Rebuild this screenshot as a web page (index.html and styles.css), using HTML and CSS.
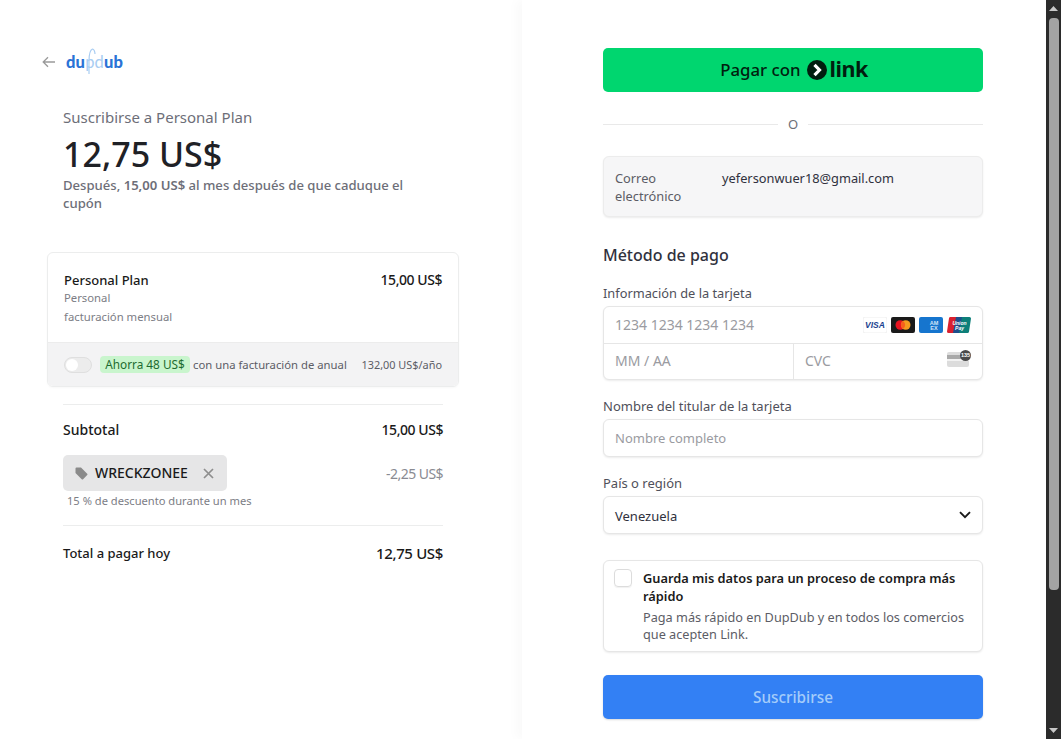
FILE: index.html
```html
<!DOCTYPE html>
<html lang="es">
<head>
    <meta charset="UTF-8">
    <meta name="viewport" content="width=device-width, initial-scale=1.0">
    <title>Suscribirse a Personal Plan</title>
    <link rel="stylesheet" href="styles.css">
</head>
<body>
    <div class="page">
        <section class="summary">
            <div class="brand">
                <svg class="backArrow" width="14" height="12" viewBox="0 0 14 12" fill="none" stroke="#9a9a9a" stroke-width="1.3">
                    <path d="M13 6H1.5M6 1.2L1.2 6 6 10.8"/>
                </svg>
                <div class="logo">
                    <svg class="logoNote" width="16" height="27" viewBox="0 0 16 27" fill="none" stroke="#a9cdf2" stroke-width="1.2">
                        <path d="M3 26V13M3 13C3 8 4 2 6.500 1c1.500 0 2.500 3 2.500 5"/>
                    </svg>
                    <span>du</span><span class="logoLight">pd</span><span>ub</span>
                </div>
            </div>

            <div class="intro">
                <div class="introTitle">Suscribirse a Personal Plan</div>
                <div class="introPrice">12,75 US$</div>
                <div class="introNote">Después, <b>15,00 US$</b> al mes después de que caduque el cupón</div>
            </div>

            <div class="planBox">
                <div class="planMain">
                    <div class="planInfo">
                        <div class="strong planName">Personal Plan</div>
                        <div class="small">Personal</div>
                        <div class="small">facturación mensual</div>
                    </div>
                    <div class="strong amount">15,00 US$</div>
                </div>
                <div class="planYear">
                    <span class="toggle"><span class="toggleKnob"></span></span>
                    <span class="savePill">Ahorra 48 US$</span>
                    <span class="yearText">con una facturación de anual</span>
                    <span class="yearPrice">132,00 US$/año</span>
                </div>
            </div>

            <div class="totals">
                <div class="totalRow subtotalRow">
                    <span class="strong">Subtotal</span>
                    <span class="strong amount">15,00 US$</span>
                </div>
                <div class="couponRow">
                    <div>
                        <div class="coupon">
                            <svg width="13" height="13" viewBox="0 0 13 13" fill="#8a8a8a">
                                <path d="M0.5 1.5A1 1 0 0 1 1.5 0.5H6L12.2 6.7a1 1 0 0 1 0 1.4L8.1 12.2a1 1 0 0 1-1.4 0L0.5 6z"/>
                            </svg>
                            <span class="couponCode">WRECKZONEE</span>
                            <svg width="11" height="11" viewBox="0 0 11 11" fill="none" stroke="#8e8e8e" stroke-width="1.7">
                                <path d="M1 1l9 9M10 1l-9 9"/>
                            </svg>
                        </div>
                        <div class="couponNote">15 % de descuento durante un mes</div>
                    </div>
                    <span class="discount">-2,25 US$</span>
                </div>
                <div class="totalRow dueRow">
                    <span class="strong planName">Total a pagar hoy</span>
                    <span class="duePrice">12,75 US$</span>
                </div>
            </div>
        </section>

        <section class="checkout">
            <button class="linkButton" type="button">
                <span>Pagar con</span>
                <svg width="20" height="20" viewBox="0 0 20 20">
                    <circle cx="10" cy="10" r="10" fill="#011e0f"/>
                    <path d="M7.500 4.800l5 5.200-5 5.200" fill="none" stroke="#fff" stroke-width="3.200"/>
                </svg>
                <span class="linkWord">link</span>
            </button>

            <div class="orLine"><span>O</span></div>

            <div class="emailBox">
                <span class="emailLabel">Correo electrónico</span>
                <span class="emailValue">yefersonwuer18@gmail.com</span>
            </div>

            <h2 class="payTitle">Método de pago</h2>

            <label class="fieldLabel cardLabel">Información de la tarjeta</label>
            <div class="cardBox">
                <div class="cardRow">
                    <span class="placeholder cardDigits">1234 1234 1234 1234</span>
                    <div class="brands">
                        <svg width="24" height="16" viewBox="0 0 24 16">
                            <rect width="24" height="16" rx="2" fill="#fff" stroke="#eee"/>
                            <text class="visaMark" x="12" y="11.400" text-anchor="middle">VISA</text>
                        </svg>
                        <svg width="24" height="16" viewBox="0 0 24 16">
                            <rect width="24" height="16" rx="2" fill="#1a1a1a"/>
                            <circle cx="9.300" cy="8" r="4.800" fill="#e8121f"/>
                            <circle cx="14.700" cy="8" r="4.800" fill="#f59a1e"/>
                            <path d="M12 4a4.800 4.800 0 0 1 0 8 4.800 4.800 0 0 1 0-8z" fill="#f5601d"/>
                        </svg>
                        <svg width="24" height="16" viewBox="0 0 24 16">
                            <rect width="24" height="16" rx="2" fill="#1675ce"/>
                            <text class="amexMark" x="15" y="7.500" text-anchor="middle">AM</text>
                            <text class="amexMark" x="15" y="12.500" text-anchor="middle">EX</text>
                        </svg>
                        <svg width="24" height="16" viewBox="0 0 24 16">
                            <path d="M3 0h7L7 16H1.500A1.500 1.500 0 0 1 0 14.500L2 1.200A1.500 1.500 0 0 1 3 0z" fill="#d9202f"/>
                            <path d="M9 0h7l-3 16H6z" fill="#1c4f8c"/>
                            <path d="M15 0h7.500A1.500 1.500 0 0 1 24 1.500L22 14.800A1.500 1.500 0 0 1 20.500 16H12z" fill="#0d7f79"/>
                            <text class="upMark" x="12.500" y="7.500" text-anchor="middle">Union</text>
                            <text class="upMark" x="12.500" y="12.500" text-anchor="middle">Pay</text>
                        </svg>
                    </div>
                </div>
                <div class="cardSplit">
                    <div class="cardCell"><span class="placeholder cardDigits">MM / AA</span></div>
                    <div class="cardCell cvcCell">
                        <span class="placeholder cardDigits">CVC</span>
                        <svg class="cvcIcon" width="24" height="17" viewBox="0 0 24 17">
                            <rect y="2" width="22" height="15" rx="2" fill="#dcdcdc"/>
                            <rect y="5" width="22" height="4" fill="#a9a9a9"/>
                            <rect y="9" width="22" height="2" fill="#f2f2f2"/>
                            <circle cx="18.500" cy="5.500" r="5.500" fill="#4a4a4a"/>
                            <text class="cvcMark" x="18.500" y="7.400" text-anchor="middle">135</text>
                        </svg>
                    </div>
                </div>
            </div>

            <label class="fieldLabel nameLabel">Nombre del titular de la tarjeta</label>
            <div class="inputBox"><span class="placeholder">Nombre completo</span></div>

            <label class="fieldLabel countryLabel">País o región</label>
            <div class="inputBox selectBox">
                <span class="selectValue">Venezuela</span>
                <svg width="12" height="8" viewBox="0 0 12 8" fill="none" stroke="#1a1a1a" stroke-width="1.900">
                    <path d="M1 1.200l5 5 5-5"/>
                </svg>
            </div>

            <div class="saveBox">
                <span class="checkBox"></span>
                <div class="saveText">
                    <div class="saveTitle">Guarda mis datos para un proceso de compra más rápido</div>
                    <div class="saveNote">Paga más rápido en DupDub y en todos los comercios que acepten Link.</div>
                </div>
            </div>

            <button class="subscribeButton" type="button">Suscribirse</button>
        </section>

        <div class="scrollBar">
            <svg width="9" height="5" viewBox="0 0 9 5" fill="#c8c8c8"><path d="M0 5L4.500 0 9 5z"/></svg>
            <div class="scrollTrack"><div class="scrollThumb"></div></div>
            <svg width="9" height="5" viewBox="0 0 9 5" fill="#c8c8c8"><path d="M0 0L4.500 5 9 0z"/></svg>
        </div>
    </div>
</body>
</html>
```

FILE: styles.css
```css
* {
    box-sizing: border-box;
}

html, body {
    margin: 0;
    height: 100%;
    overflow: hidden;
    background-color: #fff;
}

body {
    font-family: "Noto Sans", "Open Sans", sans-serif;
    font-size: 14px;
    color: #1a1a1a;
}

.page {
    display: flex;
    width: 1061px;
    height: 739px;
}

/* Cột trái */
.summary {
    width: 522px;
    flex-shrink: 0;
    padding: 47px 0 0 42px;
}

.brand {
    display: flex;
    align-items: center;
    gap: 10px;
    height: 30px;
}

.logo {
    position: relative;
    font-family: "Lato", sans-serif;
    font-size: 16.5px;
    line-height: 30px;
    font-weight: 900;
    letter-spacing: 0.2px;
    color: #2a73d6;
    white-space: nowrap;
}

.logoLight {
    color: #a9cdf2;
    font-weight: 400;
}

.logoNote {
    position: absolute;
    left: 20px;
    top: 1px;
}

.intro {
    padding: 30px 0 0 21px;
    width: 380px;
}

.introTitle {
    font-size: 15px;
    line-height: 20px;
    color: #6d6e78;
}

.introPrice {
    margin-top: 5px;
    font-size: 34px;
    line-height: 44px;
    font-weight: 500;
    color: #1f2126;
}

.introNote {
    font-size: 13.1px;
    line-height: 18px;
    font-weight: 500;
    color: #6d6e78;
}

.introNote b {
    font-weight: 600;
}

.planBox {
    width: 412px;
    margin: 40px 0 0 5px;
    border: 1px solid #eceded;
    border-radius: 6px;
    box-shadow: 0 1px 2px rgba(0, 0, 0, 0.03);
    overflow: hidden;
}

.planMain {
    display: flex;
    justify-content: space-between;
    height: 89px;
    padding: 19px 16px 0;
}

.strong {
    font-size: 14px;
    line-height: 16px;
    font-weight: 500;
    color: #1a1a1a;
}

.planName {
    font-size: 13px;
}

.amount {
    letter-spacing: -0.45px;
}

.small {
    font-size: 11.3px;
    line-height: 19px;
    color: #7c7d85;
}

.planYear {
    display: flex;
    align-items: center;
    height: 44px;
    padding: 0 16px;
    background-color: #f3f3f4;
    border-top: 1px solid #ececec;
    font-size: 11.3px;
    color: #5c5d66;
    white-space: nowrap;
}

.toggle {
    width: 28px;
    height: 16px;
    border-radius: 8px;
    background-color: #ececec;
    border: 1px solid #dfdfdf;
    padding: 1px;
}

.toggleKnob {
    display: block;
    width: 12px;
    height: 12px;
    border-radius: 50%;
    background-color: #fff;
}

.savePill {
    margin-left: 8px;
    width: 90px;
    text-align: center;
    line-height: 17px;
    font-size: 11.8px;
    border-radius: 4px;
    background-color: #c9f5cd;
    color: #1d6b30;
}

.yearText {
    margin-left: 3px;
}

.yearPrice {
    margin-left: auto;
    font-size: 10.9px;
}

.totals {
    width: 380px;
    margin: 17px 0 0 21px;
}

.totalRow {
    display: flex;
    justify-content: space-between;
    align-items: center;
}

.subtotalRow {
    border-top: 1px solid #eceded;
    padding-top: 17px;
}

.couponRow {
    display: flex;
    justify-content: space-between;
    align-items: flex-start;
    margin-top: 17px;
    height: 71px;
    border-bottom: 1px solid #eceded;
}

.coupon {
    display: flex;
    align-items: center;
    width: 164px;
    height: 36px;
    padding: 0 12px;
    border-radius: 5px;
    background-color: #e6e6e7;
}

.couponCode {
    margin: 0 15px 0 7px;
    font-size: 14px;
    line-height: 18px;
    font-weight: 500;
    color: #1a1a1a;
}

.couponNote {
    margin: 1px 0 0 4px;
    font-size: 11.15px;
    line-height: 18px;
    color: #7c7d85;
}

.discount {
    margin-top: 9px;
    line-height: 20px;
    letter-spacing: -0.55px;
    color: #8a8b92;
}

.dueRow {
    padding-top: 17px;
}

.duePrice {
    font-size: 15px;
    line-height: 20px;
    font-weight: 500;
    letter-spacing: -0.35px;
}

/* Cột phải */
.checkout {
    flex: 1;
    padding: 48px 63px 0 81px;
    box-shadow: -6px 0 10px rgba(0, 0, 0, 0.025);
}

.linkButton {
    display: flex;
    justify-content: center;
    align-items: center;
    gap: 6px;
    width: 100%;
    height: 44px;
    padding: 0 0 2px 2px;
    border: none;
    border-radius: 5px;
    background-color: #00d66f;
    font-family: inherit;
    font-size: 16.8px;
    font-weight: 500;
    color: #011e0f;
}

.linkButton svg {
    margin-top: 2px;
}

.linkWord {
    margin-left: -3px;
    font-size: 21.5px;
    line-height: 30px;
    font-weight: 700;
    letter-spacing: -0.5px;
}

.orLine {
    display: flex;
    align-items: center;
    gap: 10px;
    margin-top: 22px;
    height: 20px;
    font-size: 13px;
    color: #6d6e78;
}

.orLine::before,
.orLine::after {
    content: "";
    flex: 1;
    border-top: 1px solid #e9e9e9;
}

.emailBox {
    display: flex;
    height: 61px;
    margin-top: 22px;
    padding: 12px 11px;
    border-radius: 6px;
    border: 1px solid #ececec;
    background-color: #f6f6f7;
    box-shadow: 0 1px 2px rgba(0, 0, 0, 0.08);
    line-height: 18px;
    font-size: 12.8px;
}

.emailLabel {
    width: 107px;
    color: #5c5d66;
}

.emailValue {
    color: #30313d;
}

.payTitle {
    margin: 27px 0 0;
    font-size: 16px;
    line-height: 22px;
    font-weight: 500;
    color: #30313d;
}

.fieldLabel {
    display: block;
    font-size: 13px;
    line-height: 18px;
    color: #4f505a;
}

.cardLabel {
    margin-top: 18px;
    margin-bottom: 4px;
    font-size: 12.8px;
}

.nameLabel,
.countryLabel {
    margin-top: 17px;
    margin-bottom: 4px;
}

.cardBox,
.inputBox,
.saveBox {
    border: 1px solid #e6e6e6;
    border-radius: 6px;
    background-color: #fff;
    box-shadow: 0 1px 2px rgba(0, 0, 0, 0.08);
}

.cardRow {
    display: flex;
    justify-content: space-between;
    align-items: center;
    height: 37px;
    padding: 0 11px;
    border-bottom: 1px solid #e6e6e6;
}

.brands {
    display: flex;
    gap: 4px;
}

.brands svg {
    display: block;
}

.visaMark {
    font-family: "Liberation Sans", sans-serif;
    font-size: 8.5px;
    font-weight: 700;
    font-style: italic;
    fill: #1a3f8f;
}

.amexMark {
    font-family: "Liberation Sans", sans-serif;
    font-size: 5.5px;
    font-weight: 700;
    fill: #cfe4f8;
}

.upMark {
    font-family: "Liberation Sans", sans-serif;
    font-size: 5px;
    font-weight: 700;
    font-style: italic;
    fill: #fff;
}

.cvcMark {
    font-family: "Liberation Sans", sans-serif;
    font-size: 5.5px;
    font-weight: 700;
    fill: #fff;
}

.cardSplit {
    display: flex;
    height: 35px;
}

.cardCell {
    display: flex;
    justify-content: space-between;
    align-items: center;
    width: 189px;
    padding: 0 11px;
}

.cvcCell {
    flex: 1;
    border-left: 1px solid #e6e6e6;
}

.cvcIcon {
    margin-top: -6px;
}

.placeholder {
    font-size: 13px;
    color: #9a9ba1;
}

.cardDigits {
    margin-bottom: 2px;
    font-size: 14px;
}

.inputBox {
    display: flex;
    align-items: center;
    height: 38px;
    padding: 0 11px;
}

.selectBox {
    justify-content: space-between;
}

.selectValue {
    margin-top: 2px;
    font-size: 13px;
    color: #30313d;
}

.saveBox {
    display: flex;
    gap: 11px;
    height: 92px;
    margin-top: 26px;
    padding: 8px 10px;
}

.checkBox {
    flex-shrink: 0;
    width: 18px;
    height: 18px;
    border: 1px solid #dcdcdc;
    border-radius: 4px;
    box-shadow: 0 1px 1px rgba(0, 0, 0, 0.06);
}

.saveTitle {
    font-size: 12.8px;
    line-height: 18px;
    font-weight: 600;
    color: #1a1a1a;
}

.saveNote {
    margin-top: 4px;
    font-size: 12.7px;
    line-height: 17px;
    color: #5c5d66;
}

.subscribeButton {
    display: block;
    width: 100%;
    height: 44px;
    margin-top: 23px;
    border: none;
    border-radius: 5px;
    background-color: #3380f4;
    box-shadow: 0 1px 2px rgba(0, 0, 0, 0.15);
    font-family: inherit;
    font-size: 15.3px;
    font-weight: 500;
    color: #a4ccfa;
}

.scrollBar {
    display: flex;
    flex-direction: column;
    align-items: center;
    gap: 7px;
    width: 15px;
    flex-shrink: 0;
    padding: 6px 0;
    background-color: #2b2b2b;
}

.scrollTrack {
    flex: 1;
    width: 100%;
}

.scrollThumb {
    width: 10px;
    height: 572px;
    margin: 0 auto;
    border-radius: 4px;
    background-color: #a3a3a3;
}
```
